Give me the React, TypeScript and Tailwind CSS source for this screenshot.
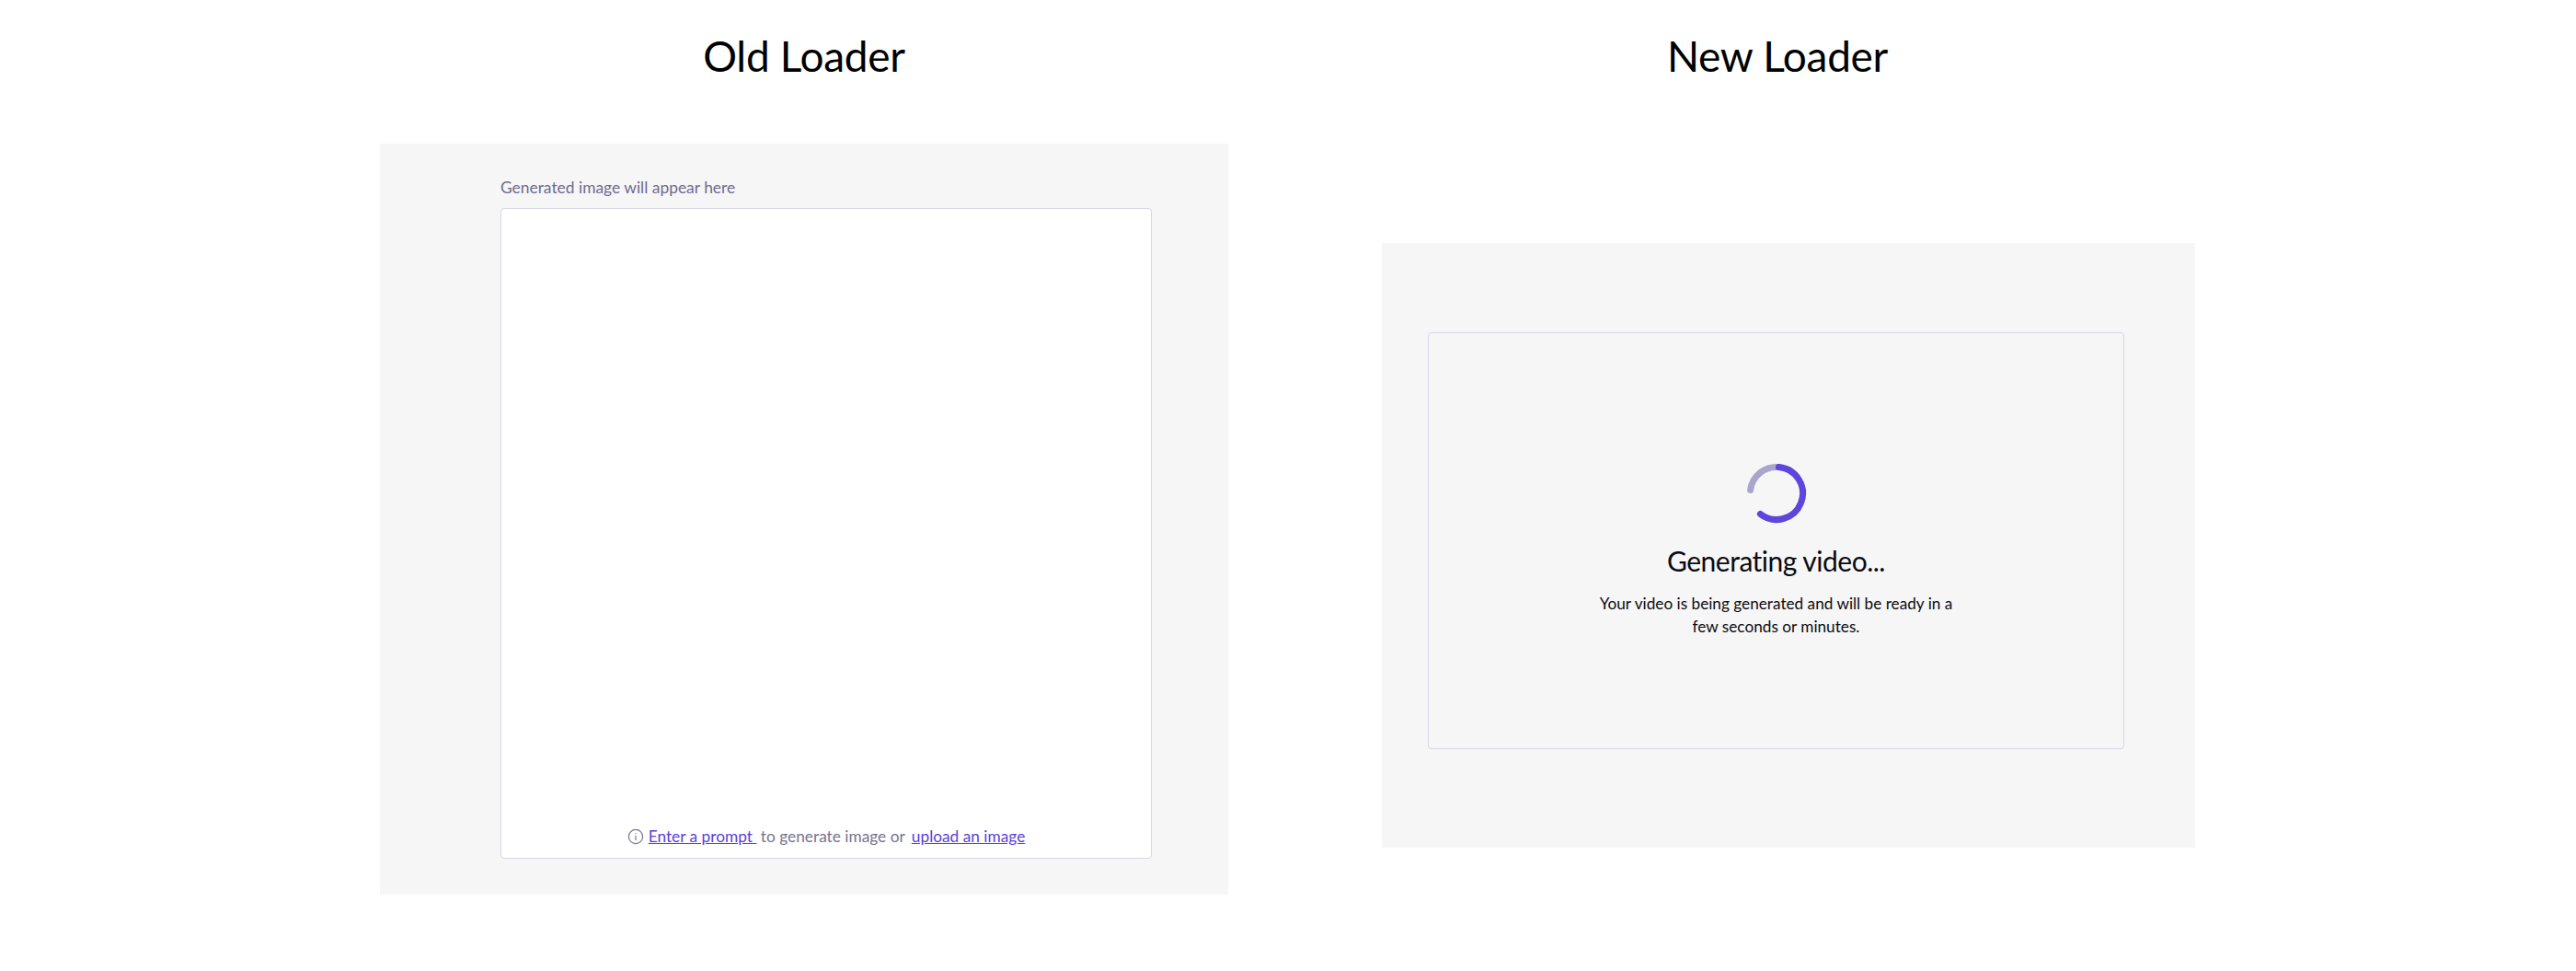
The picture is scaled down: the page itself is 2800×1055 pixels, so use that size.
import React from 'react';

const Spinner: React.FC = () => (
    <svg width="72" height="72" viewBox="0 0 72 72" fill="none" strokeWidth="7" strokeLinecap="round">
        {/* light tail, then the solid arc on top */}
        <path d="M7.6 32.5A28.5 28.5 0 0 1 38.5 7.6" stroke="#aaa5cd" />
        <path d="M38.5 7.6A28.5 28.5 0 1 1 18.4 58.4" stroke="#5e46dc" />
    </svg>
);

const InfoIcon: React.FC = () => (
    <svg width="18" height="18" viewBox="0 0 18 18" fill="none" stroke="#77738f" strokeWidth="1.2" strokeLinecap="round">
        <circle cx="9" cy="9" r="7.6" />
        <path d="M9 8.4v4" />
        <path d="M9 5.6v.2" />
    </svg>
);

const App: React.FC = () => {
    return (
        <div className="w-[2800px] h-[1055px] bg-white flex font-['Lato',sans-serif] overflow-hidden">
            {/* Old loader */}
            <div className="ml-[413px] w-[922px] flex flex-col">
                <h1 className="mt-[31px] h-[60px] leading-[60px] text-center text-[46px] font-normal tracking-[-0.3px] text-black">Old Loader</h1>
                <div className="mt-[65px] h-[816px] bg-[#f6f6f6] pl-[131px] pr-[83px] pt-[36px] flex flex-col">
                    <p className="h-[34px] text-[17.4px] leading-[24px] text-[#6f6b91]">Generated image will appear here</p>
                    <div className="h-[707px] bg-white border border-[#d6d5e6] rounded-[4px] flex flex-col justify-end items-center pb-[11px]">
                        <div className="flex items-center gap-[5px] text-[17.3px] leading-[24px] text-[#77738f]">
                            <InfoIcon />
                            <span className="whitespace-pre">
                                <a className="text-[#5a3fdc] underline">Enter a prompt </a> to generate image or <a className="ml-[3px] text-[#5a3fdc] underline">upload an image</a>
                            </span>
                        </div>
                    </div>
                </div>
            </div>

            {/* New loader */}
            <div className="ml-[167px] w-[884px] flex flex-col">
                <h1 className="mt-[31px] h-[60px] leading-[60px] text-center text-[46px] font-normal tracking-[-0.3px] text-black pr-[24px]">New Loader</h1>
                <div className="mt-[173px] h-[657px] bg-[#f6f6f6] pl-[50px] pr-[77px] pt-[97px]">
                    <div className="h-[453px] border border-[#d6d5e6] rounded-[4px] flex flex-col items-center pt-[138px]">
                        <Spinner />
                        <h2 className="mt-[17px] text-[30px] leading-[40px] tracking-[-0.5px] text-[#0b0b12]">Generating video...</h2>
                        <p className="mt-[14px] w-[400px] text-center text-[17.2px] leading-[25px] text-[#0b0b12]">
                            Your video is being generated and will be ready in a few seconds or minutes.
                        </p>
                    </div>
                </div>
            </div>
        </div>
    );
};

export default App;
